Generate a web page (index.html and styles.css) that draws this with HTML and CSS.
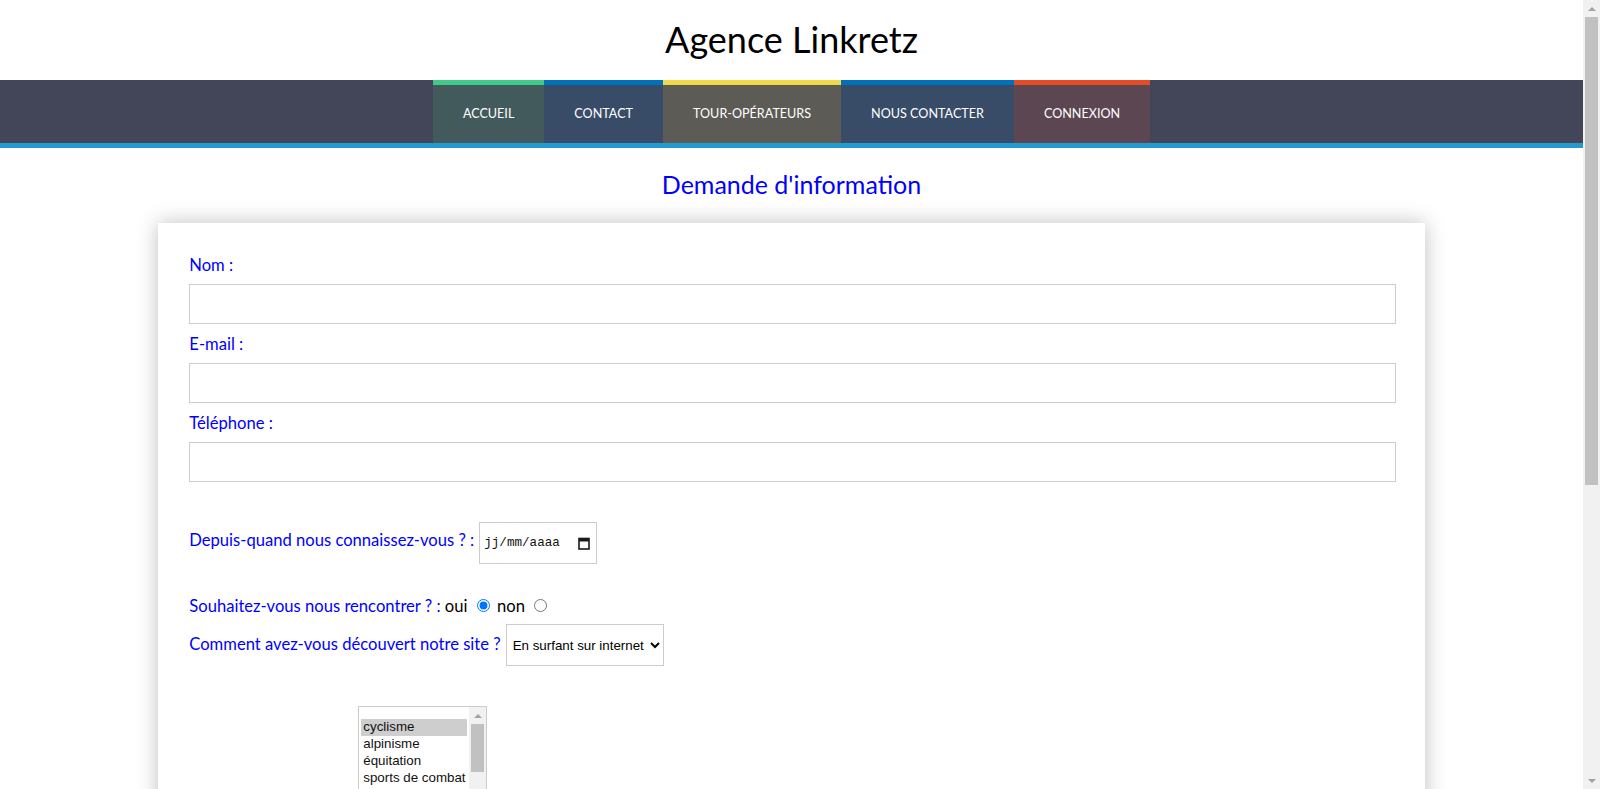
FILE: index.html
```
<!DOCTYPE html>
<html lang="fr">
<head>
<meta charset="utf-8">
<title>Agence Linkretz - Demande d'information</title>
<link rel="stylesheet" href="styles.css">
</head>
<body>
<div class="page">
  <header class="site-header">
    <h1 class="site-title">Agence Linkretz</h1>
  </header>
  <nav class="main-nav">
    <ul class="nav-list">
      <li><a class="nav-link nav-accueil" href="#">Accueil</a></li>
      <li><a class="nav-link nav-contact" href="#">Contact</a></li>
      <li><a class="nav-link nav-tour" href="#">Tour-opérateurs</a></li>
      <li><a class="nav-link nav-nous" href="#">Nous contacter</a></li>
      <li><a class="nav-link nav-connexion" href="#">Connexion</a></li>
    </ul>
  </nav>
  <main class="content">
    <h2 class="page-title">Demande d'information</h2>
    <form class="card">
      <div class="field">
        <label class="lbl" for="nom">Nom :</label>
        <input class="text-input" id="nom" type="text">
      </div>
      <div class="field">
        <label class="lbl" for="mail">E-mail :</label>
        <input class="text-input" id="mail" type="text">
      </div>
      <div class="field">
        <label class="lbl" for="tel">Téléphone :</label>
        <input class="text-input" id="tel" type="text">
      </div>

      <div class="row row-date">
        <label class="lbl" for="date">Depuis-quand nous connaissez-vous ? :</label>
        <div class="date-field" id="date">
          <span class="date-text">jj/mm/aaaa</span>
          <svg class="cal-icon" width="12" height="13" viewBox="0 0 12 13"><rect x="1" y="1.5" width="10" height="10.5" fill="none" stroke="#1a1a1a" stroke-width="1.6"/><rect x="1" y="1.5" width="10" height="3" fill="#1a1a1a"/></svg>
        </div>
      </div>

      <p class="row-radio"><span class="lbl">Souhaitez-vous nous rencontrer ? :</span> oui <input class="radio" type="radio" name="rdv" checked> non <input class="radio" type="radio" name="rdv"></p>

      <div class="row row-select">
        <label class="lbl" for="source">Comment avez-vous découvert notre site ?</label>
        <select class="select" id="source">
          <option>En surfant sur internet</option>
          <option>Par un ami</option>
          <option>Par la publicité</option>
        </select>
      </div>

      <div class="row-list">
        <label class="lbl lbl-list" id="sports-lbl">Vos sports préférés ? :</label>
        <div class="listbox" role="listbox" aria-multiselectable="true" aria-labelledby="sports-lbl">
          <div class="lb-options">
            <div class="lb-option is-selected" role="option" aria-selected="true">cyclisme</div>
            <div class="lb-option" role="option" aria-selected="false">alpinisme</div>
            <div class="lb-option" role="option" aria-selected="false">équitation</div>
            <div class="lb-option" role="option" aria-selected="false">sports de combat</div>
            <div class="lb-option" role="option" aria-selected="false">natation</div>
          </div>
          <div class="lb-scrollbar" aria-hidden="true">
            <span class="sb-btn"><span class="arrow-up"></span></span>
            <span class="lb-track"><span class="lb-thumb"></span></span>
            <span class="sb-btn"><span class="arrow-down"></span></span>
          </div>
        </div>
      </div>

      <div class="field field-msg">
        <label class="lbl" for="msg">Votre message :</label>
        <textarea class="textarea" id="msg"></textarea>
      </div>
      <button class="submit" type="button">Envoyer</button>
    </form>
  </main>
</div>
<div class="page-scrollbar" aria-hidden="true">
  <span class="sb-btn"><span class="arrow-up"></span></span>
  <span class="page-track"><span class="page-thumb"></span></span>
  <span class="sb-btn"><span class="arrow-down"></span></span>
</div>
</body>
</html>
```
FILE: styles.css
```
html, body {
  margin: 0;
  padding: 0;
}
body {
  font-family: Lato, "Liberation Sans", sans-serif;
  background: #fff;
  color: #000;
}
.page {
  margin-right: 17px;
}

/* fake browser scrollbar */
.page-scrollbar {
  position: fixed;
  top: 0;
  right: 0;
  width: 17px;
  height: 100vh;
  background: #f1f1f1;
  display: flex;
  flex-direction: column;
}
.sb-btn {
  flex: 0 0 17px;
  height: 17px;
  display: flex;
  align-items: center;
  justify-content: center;
}
.arrow-up {
  width: 0;
  height: 0;
  border-left: 4px solid transparent;
  border-right: 4px solid transparent;
  border-bottom: 4px solid #a3a3a3;
}
.arrow-down {
  width: 0;
  height: 0;
  border-left: 4px solid transparent;
  border-right: 4px solid transparent;
  border-top: 4px solid #a3a3a3;
}
.page-track {
  flex: 1;
  display: flex;
  flex-direction: column;
  padding: 0 2px;
}
.page-thumb {
  height: 468px;
  background: #c1c1c1;
}

.site-header {
  height: 80px;
  box-sizing: border-box;
  padding-top: 19px;
}
.site-title {
  margin: 0;
  text-align: center;
  font-size: 36px;
  line-height: 40px;
  font-weight: 400;
  color: #000;
}

.main-nav {
  background: #434659;
  border-bottom: 5px solid #239bcf;
}
.nav-list {
  list-style: none;
  margin: 0;
  padding: 0;
  display: flex;
  justify-content: center;
}
.nav-link {
  display: block;
  padding: 0 30px;
  height: 58px;
  line-height: 58px;
  border-top: 5px solid transparent;
  color: #fff;
  text-decoration: none;
  text-transform: uppercase;
  font-size: 12.6px;
}
.nav-accueil { background: #435a5c; border-top-color: #41c98a; }
.nav-contact { background: #384c68; border-top-color: #0070bb; }
.nav-tour { background: #5d5b56; border-top-color: #f0d94b; }
.nav-nous { background: #384c68; border-top-color: #0070bb; }
.nav-connexion { background: #5c4651; border-top-color: #e44c26; }

.page-title {
  margin: 0 0 24px;
  padding-top: 21px;
  text-align: center;
  font-size: 25px;
  line-height: 30px;
  font-weight: 400;
  color: #0000ff;
}

.card {
  width: 80%;
  margin: 0 auto 40px;
  box-sizing: border-box;
  padding: 32px 29px 40px 31px;
  background: #fff;
  box-shadow: 0 0 20px rgba(0, 0, 0, 0.25);
}

.lbl {
  color: #0000ff;
  font-size: 16.6px;
  line-height: 20px;
}
.field .lbl {
  display: block;
}
.text-input {
  display: block;
  width: 100%;
  height: 40px;
  box-sizing: border-box;
  margin: 9px 0 10px;
  padding: 12px 2px;
  border: 1px solid #ccc;
  border-radius: 0;
  font-family: "Liberation Sans", sans-serif;
  font-size: 13.33px;
}

.row {
  display: flex;
  align-items: baseline;
  gap: 5px;
}
.row-date {
  margin-top: 40px;
}
.date-field {
  width: 118px;
  height: 42px;
  box-sizing: border-box;
  border: 1px solid #ccc;
  padding: 0 6px 0 4px;
  display: flex;
  align-items: center;
  justify-content: space-between;
}
.date-text {
  font-family: "Liberation Mono", monospace;
  font-size: 12.6px;
  color: #111;
}
.cal-icon {
  display: block;
}

.row-radio {
  margin: 32px 0 0;
  font-size: 16.6px;
  line-height: 20px;
  color: #000;
}
.radio {
  margin: 3px 3px 0 5px;
}

.row-select {
  margin-top: 8px;
}
.select {
  height: 42px;
  box-sizing: border-box;
  padding: 12px 2px;
  border: 1px solid #ccc;
  border-radius: 0;
  background: #fff;
  font-family: "Liberation Sans", sans-serif;
  font-size: 13.33px;
  color: #000;
}

.row-list {
  margin-top: 40px;
  display: flex;
  align-items: flex-end;
}
.lbl-list {
  width: 169px;
  margin-bottom: -12px;
}
.listbox {
  display: flex;
  height: 94px;
  box-sizing: border-box;
  border: 1px solid #ccc;
  overflow: hidden;
  font-family: "Liberation Sans", sans-serif;
  font-size: 13.33px;
  color: #111;
}
.lb-options {
  padding: 12px 2px;
}
.lb-option {
  width: 106px;
  box-sizing: border-box;
  height: 17px;
  line-height: 15px;
  padding: 0 2px 2px;
  white-space: nowrap;
}
.lb-option.is-selected {
  background: #cecece;
}
.lb-scrollbar {
  width: 17px;
  background: #f1f1f1;
  display: flex;
  flex-direction: column;
}
.lb-track {
  flex: 1;
  display: flex;
  flex-direction: column;
  padding: 0 2px;
}
.lb-thumb {
  height: 48px;
  background: #c1c1c1;
}

.field-msg {
  margin-top: 30px;
}
.textarea {
  display: block;
  width: 100%;
  height: 180px;
  box-sizing: border-box;
  margin: 9px 0 20px;
  padding: 12px 2px;
  border: 1px solid #ccc;
}
.submit {
  background: #239bcf;
  color: #fff;
  border: 0;
  padding: 12px 24px;
  font-family: Lato, sans-serif;
  font-size: 14.4px;
}
```
